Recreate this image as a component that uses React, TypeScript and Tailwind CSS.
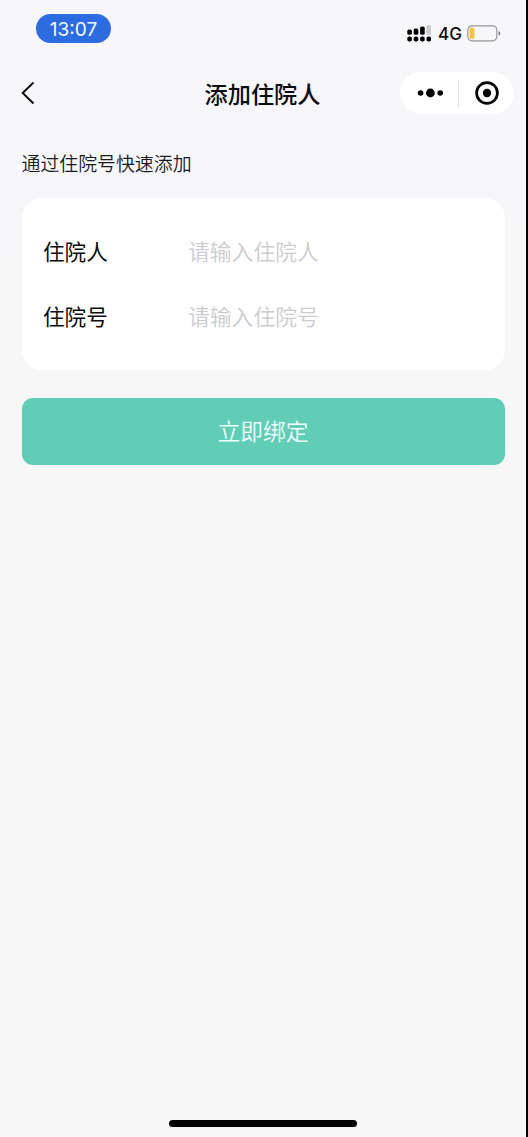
import { useState } from "react";

type FieldProps = {
  label: string;
  placeholder: string;
  value: string;
  onChange: (value: string) => void;
};

const SignalIcon = () => (
  <svg width="25" height="17" viewBox="0 0 25 17">
    <rect x="0.3" y="4.6" width="4.6" height="5.2" rx="1.6" />
    <rect x="6.7" y="3.6" width="4.6" height="6.2" rx="1.6" />
    <rect x="13.1" y="1.6" width="4.6" height="8.2" rx="1.6" />
    <rect x="19.5" y="0" width="4.4" height="9.8" rx="1.6" fill="#cbcbcf" />
    <rect x="0.3" y="11.6" width="4.6" height="5" rx="1.8" />
    <rect x="6.7" y="11.6" width="4.6" height="5" rx="1.8" />
    <rect x="13.1" y="11.6" width="4.6" height="5" rx="1.8" />
    <rect x="19.5" y="11.6" width="4.6" height="5" rx="1.8" />
  </svg>
);

const BatteryIcon = () => (
  <svg width="34" height="17" viewBox="0 0 34 17" fill="none">
    <rect x="0.8" y="0.8" width="29" height="15" rx="4.2" stroke="#98989b" strokeWidth="1.2" />
    <rect x="2.5" y="2.5" width="5" height="11.6" rx="2" fill="#f6c244" />
    <path d="M31.6 6.2v4.4c1-.3 1.7-1.2 1.7-2.2s-.7-1.9-1.7-2.2z" fill="#77777a" />
  </svg>
);

const StatusBar = () => (
  <div className="flex h-[58px] items-start justify-between pt-[14px] pr-[25px] pl-9">
    <div className="flex h-[29px] w-[75px] items-center justify-center rounded-full bg-[#2c6be0] pt-[3px] font-[Inter,sans-serif] text-[19px] text-[#f2fbff]">
      13:07
    </div>
    <div className="mt-[11px] flex items-start">
      <SignalIcon />
      <span className="ml-[6px] w-[29px] pt-px font-[Inter,sans-serif] text-[17px] leading-[17px] font-medium">
        4G
      </span>
      <BatteryIcon />
    </div>
  </div>
);

const NavBar = () => (
  <header className="grid h-[70px] grid-cols-[1fr_auto_1fr] items-center pr-[12px] pl-5">
    <button aria-label="返回" className="w-4">
      <svg width="16" height="24" viewBox="0 0 16 24" fill="none">
        <path d="M13.5 1.5L2.7 12l10.8 10.5" stroke="#111" strokeWidth="2" />
      </svg>
    </button>
    <h1 className="mb-px ml-[-9px] text-[23.2px] leading-8 font-medium">添加住院人</h1>
    <div className="flex h-[42px] w-[114px] items-center justify-self-end rounded-full bg-white">
      <button aria-label="更多" className="flex w-[58px] justify-center pl-[3px]">
        <svg width="28" height="10" viewBox="0 0 28 10">
          <circle cx="3.6" cy="5" r="2.8" />
          <circle cx="13.4" cy="5" r="4.4" />
          <circle cx="23.2" cy="5" r="2.8" />
        </svg>
      </button>
      <div className="h-[27px] w-px bg-[#e4e4e8]" />
      <button aria-label="关闭" className="flex flex-1 justify-center pl-px">
        <svg width="24" height="24" viewBox="0 0 24 24">
          <circle cx="12" cy="12" r="10.4" fill="none" stroke="#000" strokeWidth="2.7" />
          <circle cx="12" cy="12" r="4.2" />
        </svg>
      </button>
    </div>
  </header>
);

const Field = ({ label, placeholder, value, onChange }: FieldProps) => (
  <label className="flex h-[65px] items-center">
    <span className="w-[145px] text-[21.6px]">{label}</span>
    <input
      className="min-w-0 flex-1 text-[21.8px] font-[350] outline-none placeholder:text-[#cbcbd0]"
      placeholder={placeholder}
      value={value}
      onChange={(e) => onChange(e.target.value)}
    />
  </label>
);

export default function App() {
  const [name, setName] = useState("");
  const [number, setNumber] = useState("");

  return (
    <div className="flex h-[1137px] w-[528px] flex-col border-r-2 border-black bg-[#f7f7f8] bg-linear-to-b from-[#f6f6fb] from-15% to-[#f7f7f8] to-25% font-['Noto_Sans_CJK_SC',sans-serif] text-[#0c0c0e]">
      <StatusBar />
      <NavBar />
      <main className="flex flex-1 flex-col px-[21.5px]">
        <h2 className="mt-[21px] text-[18.9px] leading-7 font-[350] text-[#1a1a1e]">
          通过住院号快速添加
        </h2>
        <section className="mt-[21px] h-[172px] rounded-[20px] bg-white px-[21.5px] pt-[21px]">
          <Field label="住院人" placeholder="请输入住院人" value={name} onChange={setName} />
          <Field label="住院号" placeholder="请输入住院号" value={number} onChange={setNumber} />
        </section>
        <button className="mt-[27.5px] h-[67px] rounded-[11px] bg-[#62cdb7] text-[22.8px] font-[350] text-[#effffc]">
          立即绑定
        </button>
      </main>
      <div className="mb-[10.5px] h-[7px] w-[188px] self-center rounded-full bg-black" />
    </div>
  );
}
